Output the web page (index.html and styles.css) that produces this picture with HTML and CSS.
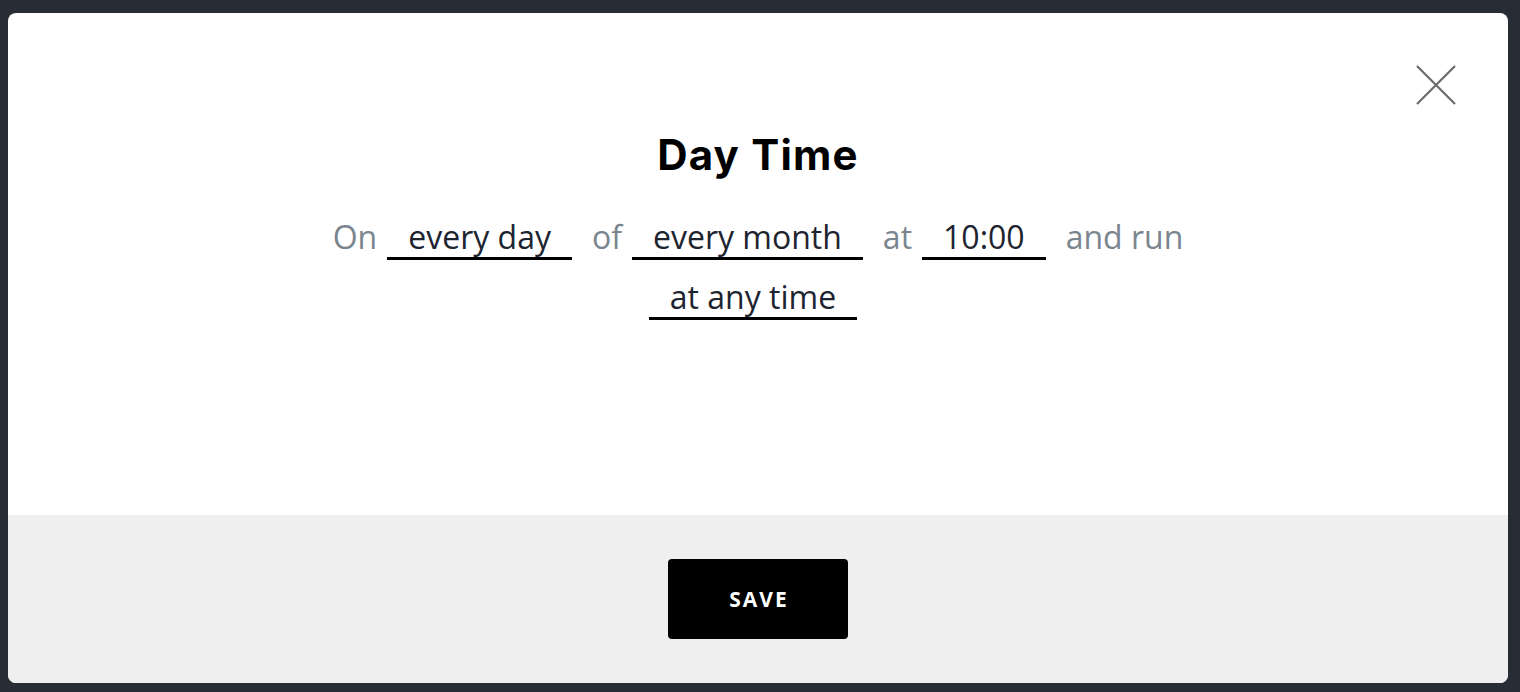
FILE: index.html
```html
<!DOCTYPE html>
<html lang="en">
<head>
<meta charset="utf-8">
<title>Day Time</title>
<link rel="stylesheet" href="styles.css">
</head>
<body>
<div class="overlay">
  <div class="modal">
    <button class="close" aria-label="Close">
      <svg width="40" height="40" viewBox="0 0 40 40"><path d="M1 1 L39 39 M39 1 L1 39" stroke="#6b6b6b" stroke-width="2.2" fill="none"/></svg>
    </button>
    <div class="body">
      <h1 class="title">Day Time</h1>
      <div class="sentence">
        <span class="label">On</span>
        <span class="field">every day</span>
        <span class="label">of</span>
        <span class="field">every month</span>
        <span class="label">at</span>
        <span class="field">10:00</span>
        <span class="label">and run</span>
        <span class="field">at any time</span>
      </div>
    </div>
    <div class="footer">
      <button class="save">SAVE</button>
    </div>
  </div>
</div>
</body>
</html>
```
FILE: styles.css
```css
html, body {
  margin: 0;
  padding: 0;
  height: 100%;
}
body {
  background: #282c35;
  font-family: "Open Sans", "Noto Sans", sans-serif;
}
.overlay {
  padding: 13px 12px 0 8px;
}
.modal {
  position: relative;
  background: #fff;
  border-radius: 8px;
  overflow: hidden;
  height: 670px;
  display: flex;
  flex-direction: column;
}
.close {
  position: absolute;
  top: 52px;
  right: 52px;
  width: 40px;
  height: 40px;
  padding: 0;
  border: 0;
  background: none;
  cursor: pointer;
}
.close svg { display: block; }
.body {
  flex: 1;
  padding-top: 117px;
}
.title {
  margin: 0;
  text-align: center;
  font-family: "Inter", sans-serif;
  font-weight: 700;
  font-size: 42px;
  line-height: 50px;
  letter-spacing: 1.2px;
  color: #000;
}
.sentence {
  max-width: 960px;
  margin: 36px auto 0;
  display: flex;
  flex-wrap: wrap;
  justify-content: center;
  align-items: flex-end;
  row-gap: 16px;
  font-size: 32px;
  line-height: 41px;
}
.label {
  color: #7a858f;
  margin: 0 10px;
  padding-bottom: 3px;
}
.field {
  color: #1d2430;
  padding: 0 21px;
  margin-right: 10px;
  border-bottom: 3px solid #000;
}
.footer {
  height: 168px;
  background: #efefef;
  display: flex;
  align-items: center;
  justify-content: center;
}
.save {
  width: 180px;
  height: 80px;
  background: #000;
  color: #fff;
  border: 0;
  border-radius: 4px;
  font-family: "Open Sans", sans-serif;
  font-weight: 700;
  font-size: 21px;
  letter-spacing: 2px;
  padding: 0 0 0 2px;
  cursor: pointer;
}
```
